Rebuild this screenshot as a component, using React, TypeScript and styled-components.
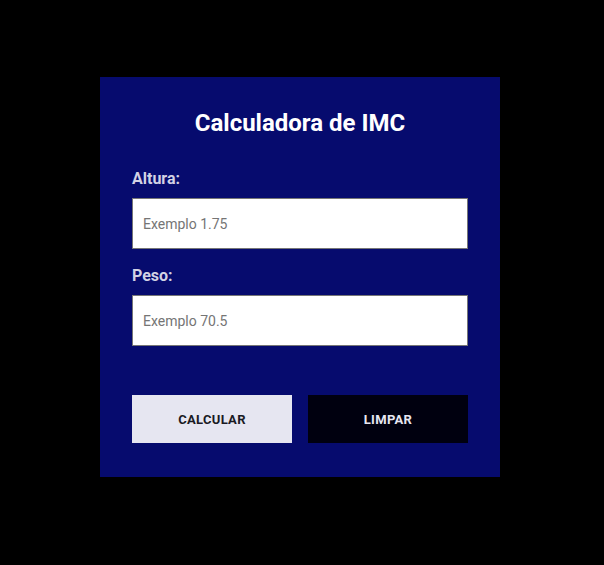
import styled, { createGlobalStyle } from "styled-components";

const GlobalStyle = createGlobalStyle`
  body {
    margin: 0;
    background: #000;
    font-family: Roboto, "Liberation Sans", sans-serif;
  }
`;

const Page = styled.div`
  display: flex;
  justify-content: center;
  padding: 77px 4px 0 0;
`;

const Card = styled.form`
  width: 400px;
  box-sizing: border-box;
  padding: 32px 32px 34px;
  background: #060b6e;
  display: flex;
  flex-direction: column;
`;

const Title = styled.h1`
  margin: 0 0 32px;
  font-size: 24px;
  line-height: 28px;
  font-weight: 700;
  color: #fff;
  text-align: center;
`;

const Field = styled.div`
  display: flex;
  flex-direction: column;
  gap: 10px;
  margin-bottom: 17px;
`;

const Label = styled.label`
  font-size: 16px;
  line-height: 19px;
  font-weight: 700;
  color: #d2d2e4;
`;

const Input = styled.input`
  height: 51px;
  box-sizing: border-box;
  padding: 0 10px;
  border: 1px solid #767676;
  background: #fff;
  font-family: Roboto, "Liberation Sans", sans-serif;
  font-size: 14px;
  color: #222;
  outline: none;

  &::placeholder {
    color: #757575;
  }
`;

const Actions = styled.div`
  display: grid;
  grid-template-columns: 1fr 1fr;
  gap: 16px;
  margin-top: 32px;
`;

const Button = styled.button<{ $dark?: boolean }>`
  height: 48px;
  border: none;
  background: ${(p) => (p.$dark ? "#00000f" : "#e6e6f1")};
  color: ${(p) => (p.$dark ? "#e6e6f1" : "#1a1a24")};
  font-family: Roboto, "Liberation Sans", sans-serif;
  font-size: 13px;
  font-weight: 700;
  letter-spacing: 0.3px;
  cursor: pointer;
`;

export default function App() {
  return (
    <>
      <GlobalStyle />
      <Page>
        <Card onSubmit={(e) => e.preventDefault()}>
          <Title>Calculadora de IMC</Title>
          <Field>
            <Label htmlFor="altura">Altura:</Label>
            <Input id="altura" type="text" placeholder="Exemplo 1.75" />
          </Field>
          <Field>
            <Label htmlFor="peso">Peso:</Label>
            <Input id="peso" type="text" placeholder="Exemplo 70.5" />
          </Field>
          <Actions>
            <Button type="submit">CALCULAR</Button>
            <Button type="reset" $dark>
              LIMPAR
            </Button>
          </Actions>
        </Card>
      </Page>
    </>
  );
}
